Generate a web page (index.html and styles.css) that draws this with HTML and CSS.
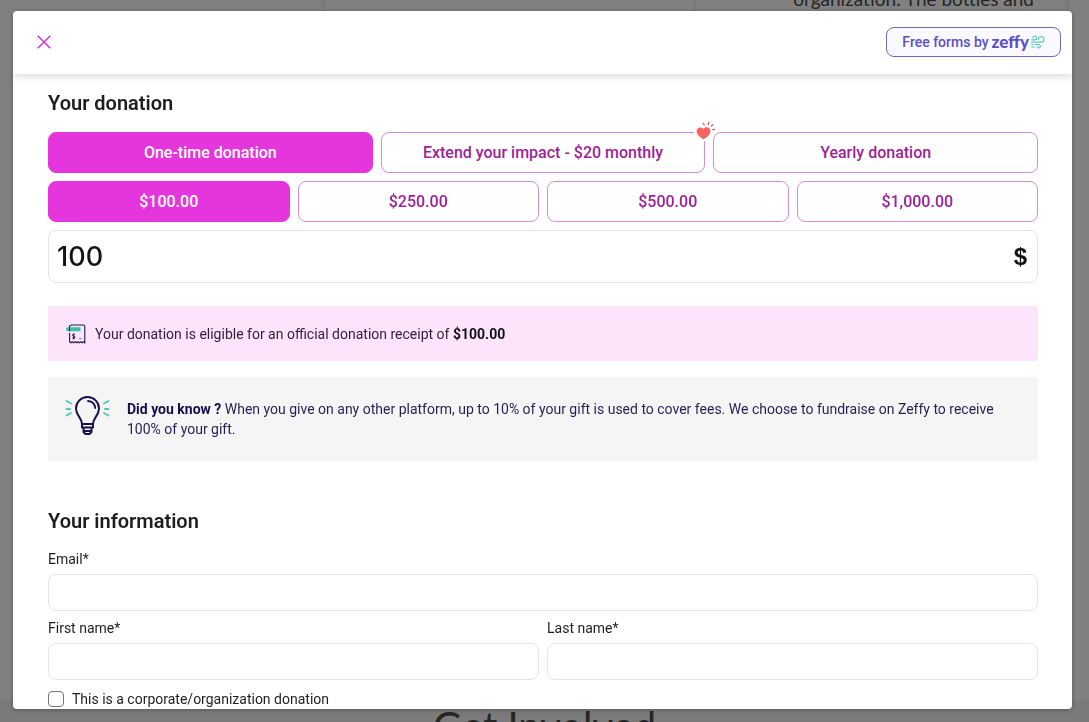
FILE: index.html
```
<!DOCTYPE html>
<html lang="en">
<head>
  <meta charset="UTF-8" />
  <meta name="viewport" content="width=device-width, initial-scale=1.0">
  <title>Donation form</title>
  <link rel="stylesheet" href="styles.css">
</head>
<body>

  <!-- Page behind the modal -->
  <div class="page">
    <div class="cards">
      <div class="card"></div>
      <div class="card"></div>
      <div class="card"><p>organization. The bottles and</p></div>
    </div>
    <div class="involved">
      <h1>Get Involved</h1>
    </div>
  </div>

  <div class="overlay">
    <div class="modal" role="dialog" aria-label="Donation form">
      <header class="modal-header">
        <button class="close-btn" type="button" aria-label="Close">
          <svg width="14" height="14" viewBox="0 0 14 14" fill="none" stroke="currentColor" stroke-width="1.5">
            <path d="M.7.7l12.6 12.6M13.3.7L.7 13.3" />
          </svg>
        </button>
        <a class="zeffy-link" href="#">
          <span>Free forms by</span>
          <span class="zeffy">zeffy</span>
          <svg width="14" height="14" viewBox="0 0 14 14" fill="none" stroke="#5ccdb8" stroke-width="1.2" stroke-linecap="round">
            <path d="M.7 4.8h3.1a1.9 1.9 0 1 0-1.900-1.900" />
            <path d="M.7 7.2h9.500a2.800 2.800 0 1 0-2.800-2.800" />
            <path d="M.7 9.6h1.600M4.300 9.600h3.500a1.600 1.600 0 1 1-1.500 2.300" />
            <path d="M.7 12h3" />
          </svg>
        </a>
      </header>

      <form class="modal-body">
        <h2>Your donation</h2>
        <div class="row">
          <button class="choice active" type="button">One-time donation</button>
          <button class="choice" type="button">Extend your impact - $20 monthly
            <span class="heart">
              <svg width="22" height="20" viewBox="0 0 22 20">
                <path d="M9.500 18.500C6 16 2.600 13.600 2.600 10.300c0-2.200 1.700-3.900 3.700-3.900 1.300 0 2.400.6 3.100 1.500.8-1.200 2-1.800 3.300-1.700 2.200.1 3.800 1.700 3.700 4C16.300 13.600 13 16 9.500 18.500z" fill="#fb625f" />
                <g fill="none" stroke-width="1.200" stroke-linecap="round">
                  <path d="M9.300 2.300l.9 1.600M14.800 1.300l-.6 2.200" stroke="#e94b58" />
                  <path d="M18.800 3.800l-1.400 1.100M20.300 8.700l-1.400-.4" stroke="#b0425f" />
                </g>
              </svg>
            </span>
          </button>
          <button class="choice" type="button">Yearly donation</button>
        </div>
        <div class="row">
          <button class="choice active" type="button">$100.00</button>
          <button class="choice" type="button">$250.00</button>
          <button class="choice" type="button">$500.00</button>
          <button class="choice" type="button">$1,000.00</button>
        </div>
        <div class="amount">
          <input id="amount" type="text" value="100" aria-label="Donation amount" />
          <span>$</span>
        </div>

        <div class="receipt">
          <svg width="20" height="20" viewBox="0 0 20 20" fill="none">
            <path d="M3.500 4V3a2 2 0 0 1 2-2h11.700a1.600 1.600 0 0 1 1.600 1.600v16.200l-1.300-1-1.400 1-1.400-1-1.400 1-1.400-1-1.400 1-1.400-1-1.400 1-1.400-1-1.400 1-1.300-1V9" stroke="#1f1a4f" stroke-width="1.100" />
            <path d="M2 3.300h12.500v4H2a2 2 0 0 1 0-4z" fill="#39bfa7" />
            <path d="M3.500 3.300v4" stroke="#1f1a4f" />
            <path d="M9 10.700c-.5-.6-2.600-.7-2.600.5s2.700.8 2.700 2.100-2.200 1.200-2.900.5M7.700 9.500v6" stroke="#1f1a4f" />
            <path d="M13 14.500h2.500" stroke="#8f83a8" />
          </svg>
          <p>Your donation is eligible for an official donation receipt of <b>$100.00</b></p>
        </div>

        <div class="info">
          <svg width="46" height="42" viewBox="0 0 46 42" fill="none" stroke-linecap="round" stroke-linejoin="round">
            <g stroke="#18104f" stroke-width="2">
              <path d="M17 29c0-6.500-6-8-6-15.500a11.500 11.500 0 0 1 23 0C34 21 28 22.500 28 29z" />
              <path d="M17 29v3.500h11V29M18.500 33v4l2 2h4l2-2v-4M18.500 36h8" />
              <path d="M23 6c4 .3 6.800 3 7.200 7" stroke-width="1.800" />
            </g>
            <g stroke="#4fc9ab" stroke-width="1.800">
              <path d="M1.500 6l4.500 2.500M1.500 14h3.500M1.500 20.500L6 18" />
              <path d="M43.500 6L39 8.500M43.500 14H40M43.500 20.500L39 18" />
            </g>
          </svg>
          <p><b>Did you know ?</b> When you give on any other platform, up to 10% of your gift is used to cover fees. We choose to fundraise on Zeffy to receive 100% of your gift.</p>
        </div>

        <h2>Your information</h2>
        <div class="field">
          <label for="email">Email*</label>
          <input id="email" type="email" />
        </div>
        <div class="row">
          <div class="field">
            <label for="firstName">First name*</label>
            <input id="firstName" type="text" />
          </div>
          <div class="field">
            <label for="lastName">Last name*</label>
            <input id="lastName" type="text" />
          </div>
        </div>
        <div class="check">
          <input id="corporate" type="checkbox" />
          <label for="corporate">This is a corporate/organization donation</label>
        </div>
      </form>
    </div>
  </div>

</body>
</html>
```

FILE: styles.css
```
* {
  box-sizing: border-box;
}

body {
  margin: 0;
  font-family: Roboto, "Liberation Sans", sans-serif;
  font-size: 14px;
  color: #1e1e1e;
  overflow: hidden;
}

h1, h2, p {
  margin: 0;
}

svg {
  display: block;
  flex-shrink: 0;
}

button, input {
  font-family: inherit;
}

/* Page behind */
.page {
  height: 100vh;
  display: flex;
  flex-direction: column;
  justify-content: space-between;
  background: #808080;
  overflow: hidden;
}

.cards {
  display: grid;
  grid-template-columns: 325fr 371fr 373fr;
  grid-template-rows: 100%;
  height: 11px;
  padding-right: 20px;
  overflow: hidden;
}

.card {
  display: flex;
  flex-direction: column;
  justify-content: flex-end;
  border-right: 3px solid #797979;
  padding-right: 32px;
  text-align: right;
  font-family: Lato, sans-serif;
  font-size: 19px;
  line-height: 24px;
  color: #262626;
  white-space: nowrap;
}

.involved {
  height: 22px;
  padding-top: 2px;
  background: #7b7b7b;
  overflow: hidden;
}

.involved h1 {
  font-family: Lato, sans-serif;
  font-size: 40px;
  font-weight: 400;
  line-height: 48px;
  text-align: center;
  color: #262626;
}

/* Modal */
.overlay {
  position: fixed;
  inset: 0;
  display: flex;
  padding: 11px 17px 13px 13px;
}

.modal {
  flex: 1;
  display: flex;
  flex-direction: column;
  background: #fff;
  border-radius: 4px;
  box-shadow: 0 1px 4px rgba(0, 0, 0, 0.3);
  overflow: hidden;
}

.modal-header {
  position: relative;
  display: flex;
  flex-shrink: 0;
  align-items: center;
  justify-content: space-between;
  height: 63px;
  padding: 0 11px 2px 16px;
  box-shadow: 0 2px 8px rgba(0, 0, 0, 0.16);
}

.close-btn {
  padding: 8px;
  border: none;
  background: none;
  color: #c936c4;
  cursor: pointer;
}

.zeffy-link {
  display: flex;
  align-items: center;
  height: 30px;
  padding: 0 15px;
  border: 1px solid #7268b5;
  border-radius: 8px;
  background: #f9f9ff;
  color: #5b50c4;
  font-weight: 500;
  text-decoration: none;
}

.zeffy {
  margin: 0 2px 0 3px;
  font-family: Lato, sans-serif;
  font-size: 17px;
  font-weight: 900;
  line-height: 20px;
}

.modal-body {
  flex: 1;
  padding: 17px 34px 0 35px;
  overflow-y: auto;
  scrollbar-width: none;
}

h2 {
  margin-bottom: 17px;
  font-size: 20px;
  font-weight: 600;
  line-height: 24px;
}

.row {
  display: flex;
  gap: 8px;
  margin-bottom: 8px;
}

.choice {
  position: relative;
  flex: 1 1 0;
  height: 41px;
  padding: 0;
  border: 1px solid #d48ed2;
  border-radius: 8px;
  background: #fff;
  color: #9c1f98;
  font-size: 16px;
  font-weight: 500;
  cursor: pointer;
}

.choice.active {
  border-color: #e535dc;
  background: #e535dc;
  color: #fff;
}

.heart {
  position: absolute;
  top: -12px;
  right: -12px;
  background: #fff;
  border-radius: 8px;
}

.amount {
  display: flex;
  align-items: center;
  height: 53px;
  padding: 0 10px 0 8px;
  border: 1px solid #e4e4e4;
  border-radius: 8px;
  font-family: Inter, sans-serif;
}

.amount input {
  flex: 1;
  min-width: 0;
  padding: 0;
  border: none;
  color: #141414;
  font-size: 27px;
  font-weight: 500;
}

.amount input:focus {
  outline: none;
}

.amount span {
  color: #141414;
  font-family: "Liberation Sans", sans-serif;
  font-size: 24px;
  font-weight: 700;
}

.receipt {
  display: flex;
  align-items: center;
  gap: 9px;
  height: 55px;
  margin-top: 23px;
  padding: 0 18px;
  border-radius: 3px;
  background: #fce5fb;
  color: #33213f;
}

.receipt b {
  color: #14101a;
}

.info {
  display: flex;
  gap: 16px;
  margin: 16px 0 48px;
  padding: 18px 15px 22px 17px;
  border-radius: 3px;
  background: #f5f5f5;
  color: #261f52;
  line-height: 20px;
}

.info p {
  padding-top: 4px;
}

.info b {
  color: #150d4d;
}

/* Fields */
.field {
  flex: 1;
  display: flex;
  flex-direction: column;
  margin-bottom: 8px;
}

.row .field {
  margin-bottom: 0;
}

.field label {
  height: 24px;
  line-height: 18px;
}

.field input {
  width: 100%;
  height: 37px;
  padding: 0 12px;
  border: 1px solid #e4e4e4;
  border-radius: 8px;
  font-size: 14px;
}

.check {
  display: flex;
  align-items: center;
  gap: 8px;
  padding-top: 3px;
}

.check input {
  appearance: none;
  width: 16px;
  height: 16px;
  margin: 0;
  border: 1px solid #767676;
  border-radius: 4px;
}

.check input:checked {
  background: #e535dc;
}
```
